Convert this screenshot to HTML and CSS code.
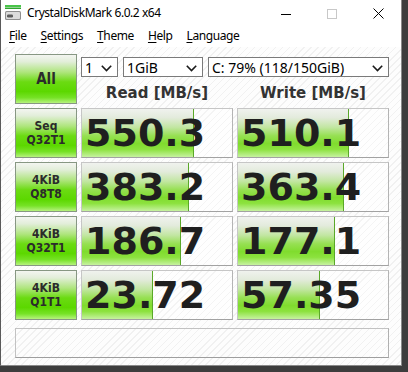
FILE: index.html
```html
<!DOCTYPE html>
<html>
<head>
<meta charset="utf-8">
<title>CrystalDiskMark 6.0.2 x64</title>
<link rel="stylesheet" href="styles.css">
</head>
<body>
<div class="window">
  <div class="titlebar">
    <svg class="app-icon" width="17" height="16" viewBox="0 0 17 16">
      <rect x="0" y="1" width="16" height="2" fill="#49c449"/>
      <rect x="0" y="3.5" width="16" height="1.5" fill="#2fa52f"/>
      <rect x="0" y="7" width="16" height="9" rx="1.5" fill="#8f8f8f"/>
      <rect x="1" y="8" width="14" height="7" rx="1" fill="#dcdcdc"/>
      <rect x="2" y="10.5" width="6" height="3" rx="1.2" fill="#5c5c5c"/>
    </svg>
    <span class="title">CrystalDiskMark 6.0.2 x64</span>
    <div class="controls">
      <span class="ctl"><svg width="10" height="10" viewBox="0 0 10 10"><line x1="0" y1="5.5" x2="10" y2="5.5" stroke="#000" stroke-width="1"/></svg></span>
      <span class="ctl"><svg width="10" height="10" viewBox="0 0 10 10"><rect x="0.5" y="0.5" width="9" height="9" fill="none" stroke="#c8c8c8" stroke-width="1"/></svg></span>
      <span class="ctl"><svg width="11" height="11" viewBox="0 0 11 11"><path d="M0.5 0.5 L10.5 10.5 M10.5 0.5 L0.5 10.5" stroke="#000" stroke-width="1" fill="none"/></svg></span>
    </div>
  </div>
  <div class="menubar">
    <span><u>F</u>ile</span>
    <span><u>S</u>ettings</span>
    <span><u>T</u>heme</span>
    <span><u>H</u>elp</span>
    <span><u>L</u>anguage</span>
  </div>
  <div class="content">
    <div class="grid">
      <div class="btn all">All</div>
      <div class="selects">
        <div class="sel sel-count"><span>1</span><svg class="chev" width="11" height="7" viewBox="0 0 11 7"><polyline points="0.8,0.8 5.5,5.5 10.2,0.8" fill="none" stroke="#1a1a1a" stroke-width="1.6"/></svg></div>
        <div class="sel sel-size"><span>1GiB</span><svg class="chev" width="11" height="7" viewBox="0 0 11 7"><polyline points="0.8,0.8 5.5,5.5 10.2,0.8" fill="none" stroke="#1a1a1a" stroke-width="1.6"/></svg></div>
        <div class="sel sel-drive"><span>C: 79% (118/150GiB)</span><svg class="chev" width="11" height="7" viewBox="0 0 11 7"><polyline points="0.8,0.8 5.5,5.5 10.2,0.8" fill="none" stroke="#1a1a1a" stroke-width="1.6"/></svg></div>
      </div>
      <div class="hdr read">Read [MB/s]</div>
      <div class="hdr write">Write [MB/s]</div>

      <div class="btn label">Seq<br>Q32T1</div>
      <div class="meter"><div class="fill" style="width:112px"></div><span class="val">550.3</span></div>
      <div class="meter"><div class="fill" style="width:111px"></div><span class="val">510.1</span></div>

      <div class="btn label">4KiB<br>Q8T8</div>
      <div class="meter"><div class="fill" style="width:107px"></div><span class="val">383.2</span></div>
      <div class="meter"><div class="fill" style="width:106px"></div><span class="val">363.4</span></div>

      <div class="btn label">4KiB<br>Q32T1</div>
      <div class="meter"><div class="fill" style="width:99px"></div><span class="val">186.7</span></div>
      <div class="meter"><div class="fill" style="width:97px"></div><span class="val">177.1</span></div>

      <div class="btn label">4KiB<br>Q1T1</div>
      <div class="meter"><div class="fill" style="width:71px"></div><span class="val">23.72</span></div>
      <div class="meter"><div class="fill" style="width:82px"></div><span class="val">57.35</span></div>
    </div>
    <div class="comment"></div>
  </div>
</div>
</body>
</html>
```

FILE: styles.css
```css
* { box-sizing: border-box; }
html, body { margin: 0; padding: 0; }
body {
  background: #3d3d3d;
  width: 408px;
  height: 372px;
  overflow: hidden;
  font-family: "Noto Sans", sans-serif;
  color: #000;
}
.window {
  width: 402px;
  height: 366px;
  background: #fff;
  border-left: 1px solid #5a5a5a;
  border-right: 1px solid #8a8a8a;
  border-bottom: 1px solid #8a8a8a;
  display: flex;
  flex-direction: column;
}
.titlebar {
  height: 28px;
  display: flex;
  align-items: flex-start;
  flex: none;
}
.app-icon { margin: 4px 0 0 4px; flex: none; }
.title {
  margin-left: 5px;
  padding-top: 5px;
  font-size: 12px;
  line-height: 16px;
  letter-spacing: -0.45px;
  white-space: nowrap;
}
.controls { margin-left: auto; display: flex; }
.ctl {
  width: 46px;
  height: 27px;
  display: flex;
  align-items: center;
  justify-content: center;
}
.ctl svg { display: block; }
.menubar {
  height: 19px;
  flex: none;
  display: flex;
  gap: 14px;
  padding-left: 8px;
  font-size: 12px;
  line-height: 16px;
  letter-spacing: -0.4px;
}
.menubar u { text-decoration-thickness: 1px; text-underline-offset: 2px; }
.content {
  flex: 1;
  padding: 7px 0 0 14px;
  background: repeating-linear-gradient(135deg, #fdfdfd 0 4px, #f1f1f1 4px 5px);
}
.grid {
  display: grid;
  grid-template-columns: 62px 152px 152px;
  grid-auto-rows: 50px;
  gap: 4px;
}
.btn {
  border: 1px solid #879783;
  background: linear-gradient(#f3f5f1 0%, #e2eed9 14%, #aee57c 36%, #6bdb12 56%, #5cd800 76%, #76e226 89%, #b6f27e 100%);
  display: flex;
  align-items: center;
  justify-content: center;
  text-align: center;
  font-family: "DejaVu Sans Condensed", "DejaVu Sans", sans-serif;
  font-stretch: condensed;
  font-weight: bold;
  color: #2b2b2b;
}
.all { grid-column: 1; grid-row: 1; font-size: 15px; }
.label { font-size: 12px; line-height: 14px; }
.selects {
  grid-column: 2 / 4;
  grid-row: 1;
  align-self: start;
  margin-top: 3px;
  height: 20px;
  display: flex;
  gap: 5px;
}
.sel {
  border: 1px solid #7a7a7a;
  background: #fff;
  display: flex;
  align-items: center;
  justify-content: space-between;
  padding: 1px 5px 0 3px;
  font-size: 14px;
  line-height: 18px;
  white-space: nowrap;
}
.sel-count { width: 37px; }
.sel-size { width: 80px; }
.sel-drive { flex: 1; }
.chev { flex: none; margin-top: 1px; }
.hdr {
  grid-row: 1;
  align-self: end;
  margin-bottom: 2px;
  text-align: center;
  font-family: "DejaVu Sans", sans-serif;
  font-weight: bold;
  font-size: 15px;
  line-height: 18px;
  color: #333;
}
.hdr.read { grid-column: 2; }
.hdr.write { grid-column: 3; }
.meter {
  display: grid;
  border: 1px solid #c6c6c6;
  border-bottom-color: #a2a2a2;
  border-right-color: #b4b4b4;
  background: repeating-linear-gradient(135deg, #fefefe 0 4px, #f4f4f4 4px 5px);
}
.meter > * { grid-area: 1 / 1; }
.fill {
  justify-self: start;
  border-right: 1px solid #5aa828;
  background: linear-gradient(#f0f2ee 0%, #e3ebdc 18%, #c2e6a2 38%, #96e052 56%, #80dc2e 72%, #8ce23e 84%, #c6f2a0 100%);
}
.val {
  align-self: center;
  padding-left: 3px;
  font-family: "DejaVu Sans", sans-serif;
  font-weight: bold;
  font-size: 38px;
  line-height: 1;
  color: #1f1f1f;
  position: relative;
}
.comment {
  margin-top: 8px;
  width: 374px;
  height: 30px;
  border: 1px solid #c2c2c2;
  border-bottom-color: #9e9e9e;
  border-right-color: #b0b0b0;
}
```
